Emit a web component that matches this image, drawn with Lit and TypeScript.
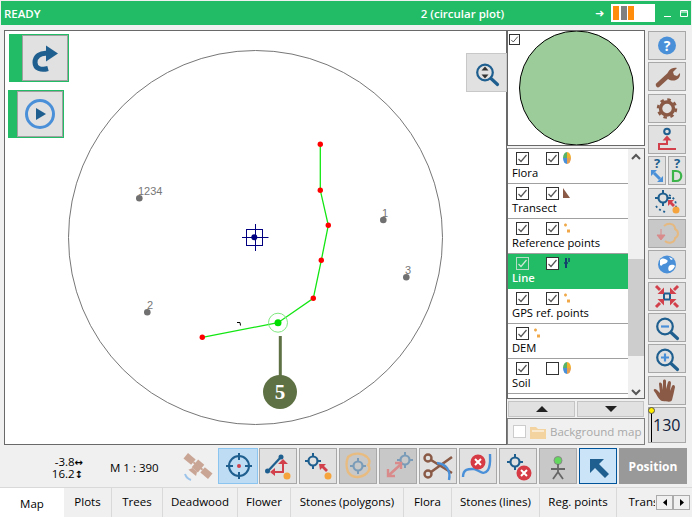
import { LitElement, html, svg, css } from 'lit';
import { customElement } from 'lit/decorators.js';

const DARK = '#1f5f8f';
const BLUE = '#4a90d9';
const BROWN = '#8a5a46';
const RED = '#d2404c';
const ORANGE = '#f5a33c';

const icon = (w: number, h: number, body: unknown) =>
  html`<svg width=${w} height=${h} viewBox="0 0 ${w} ${h}">${body}</svg>`;

const magnifier = (inner: unknown) => svg`
  <circle cx="16" cy="12.5" r="7.8" fill="none" stroke="${DARK}" stroke-width="2.2"/>
  <path d="M22 18.500l6.500 6" stroke="${DARK}" stroke-width="3.2" stroke-linecap="round"/>
  ${inner}`;

const target = (x: number, y: number, c = DARK) => svg`
  <circle cx=${x} cy=${y} r="4.5" fill="none" stroke=${c} stroke-width="2.2"/>
  <path d="M${x} ${y - 8}v3M${x} ${y + 5}v3M${x - 8} ${y}h3M${x + 5} ${y}h3" stroke=${c} stroke-width="2"/>`;

const del = (x: number, y: number, r: number) => svg`
  <circle cx=${x} cy=${y} r=${r} fill="#d63a44"/>
  <path d="M${x - 3} ${y - 3}l6 6M${x + 3} ${y - 3}l-6 6" stroke="#fff" stroke-width="2"/>`;

const inward = svg`<path d="M7 3l4 4" stroke="${RED}" stroke-width="3"/><path d="M15 11V4.500L8.500 11z" fill="${RED}"/>`;

const pie = html`<svg class="mini" width="8" height="12" viewBox="0 0 8 12">
  <path d="M4 0a4 6 0 0 0-4 6h4z" fill="#58b368"/><path d="M4 0a4 6 0 0 1 4 6H4z" fill="#f0b030"/>
  <path d="M0 6a4 6 0 0 0 4 6V6z" fill="#4a90d9"/><path d="M8 6a4 6 0 0 1-4 6V6z" fill="#e8a050"/></svg>`;
const tri = html`<svg class="mini" width="8" height="12" viewBox="0 0 8 12">
  <path d="M0 1l7 10H0z" fill="#8a5a46"/></svg>`;
const dots = html`<svg class="mini" width="8" height="12" viewBox="0 0 8 12">
  <path d="M1 3h3M2.500 1.500v3" stroke="#f0a848" stroke-width="1.500"/><path d="M4 7.500h3v3H4z" fill="#f0a848"/></svg>`;
const lineIcon = html`<svg class="mini" width="8" height="12" viewBox="0 0 8 12">
  <path d="M3 1v10" stroke="#16406c" stroke-width="2"/><path d="M1 6h4M5 2h2M5 4h2" stroke="#16406c" stroke-width="1.500"/></svg>`;

const check = html`<svg viewBox="0 0 11 11" width="100%" height="100%"><path d="M1.500 6l2.500 2.500 5.500-6.500" fill="none" stroke="currentColor" stroke-width="1.200"/></svg>`;

const LAYERS = [
  { name: 'Flora', a: true, b: true, mini: pie },
  { name: 'Transect', a: true, b: true, mini: tri },
  { name: 'Reference points', a: true, b: true, mini: dots },
  { name: 'Line', a: true, b: true, mini: lineIcon, active: true },
  { name: 'GPS ref. points', a: true, b: true, mini: dots },
  { name: 'DEM', a: true, b: null, mini: dots },
  { name: 'Soil', a: true, b: false, mini: pie },
];

const TABS: [string, number][] = [
  ['Plots', 48], ['Trees', 51], ['Deadwood', 75], ['Flower', 53],
  ['Stones (polygons)', 113], ['Flora', 48], ['Stones (lines)', 88], ['Reg. points', 77], ['Transect', 70],
];

const TOOLS = [
  { i: icon(36, 27, svg`<circle cx="18" cy="13.500" r="9" fill="${BLUE}"/><text x="18" y="18.500" text-anchor="middle" class="q w">?</text>`) },
  { i: icon(36, 27, svg`<path d="M9 22L21 11" stroke="${BROWN}" stroke-width="4.500" stroke-linecap="round"/><path d="M19 13c-1-5 3-9 9-8l-4 4 1 3 3 1 3-3c1 6-6 10-12 6z" fill="${BROWN}"/>`) },
  { i: icon(36, 27, svg`<circle cx="18" cy="13.500" r="6.500" fill="none" stroke="${BROWN}" stroke-width="3.500"/><circle cx="18" cy="13.500" r="9" fill="none" stroke="${BROWN}" stroke-width="2.500" stroke-dasharray="3.500 3.570"/>`) },
  { i: icon(36, 27, svg`<circle cx="18" cy="5.500" r="2.800" fill="none" stroke="${DARK}" stroke-width="2"/><path d="M18 9.500l-4.500 5h9z" fill="${RED}"/><path d="M18 13v5H10v5h17" fill="none" stroke="${RED}" stroke-width="2"/>`) },
  {
    pair: [
      icon(16, 27, svg`<text x="8" y="11" text-anchor="middle" class="q d">?</text><path d="M2 13h6l-6 6zM14 25H8l6-6z" fill="${BLUE}"/><path d="M5 16l6 6" stroke="${BLUE}" stroke-width="3"/>`),
      icon(16, 27, svg`<text x="8" y="11" text-anchor="middle" class="q d">?</text><path d="M4 14h3c7 0 7 10 0 10H4z" fill="none" stroke="#3cb44a" stroke-width="2.200"/>`),
    ],
  },
  { i: icon(36, 27, svg`${target(14, 9)}<path d="M20 6a12 12 0 0 1 7 12M7 17a14 14 0 0 0 11 6" fill="none" stroke="${DARK}" stroke-width="1.800" stroke-dasharray="2 2.500"/><path d="M19 11h6l-2 2 3 3-2 2-3-3-2 2z" fill="${RED}"/><circle cx="27" cy="21" r="3.500" fill="${ORANGE}"/>`) },
  { off: true, i: icon(36, 27, svg`<path d="M15 6c5-4 11-2 11 3 4 2 4 7 0 9 0 5-7 6-10 3" fill="none" stroke="#e5b980" stroke-width="2"/><path d="M12 9v7M8 15h8l-4 5z" fill="#d98a8a" stroke="#d98a8a"/>`) },
  { i: icon(36, 27, svg`<circle cx="18" cy="13.500" r="9" fill="${BLUE}"/><path d="M11 9c3-3 5-1 7 0s-1 4-3 4-2 3-4 1zM20 15c3-2 5-1 6 0-1 3-4 5-6 5-1-2-1-3 0-5zM20 6l4 2-2 1z" fill="#fff"/>`) },
  { i: icon(36, 27, svg`<rect x="15" y="10.500" width="6" height="6" fill="none" stroke="${DARK}" stroke-width="2"/>
      <g>${inward}</g>
      <g transform="translate(36 0) scale(-1 1)">${inward}</g>
      <g transform="translate(0 27) scale(1 -1)">${inward}</g>
      <g transform="translate(36 27) scale(-1 -1)">${inward}</g>`) },
  { i: icon(36, 27, magnifier(svg`<path d="M12 12.500h8" stroke="${BLUE}" stroke-width="2.200"/>`)) },
  { i: icon(36, 27, magnifier(svg`<path d="M12 12.500h8M16 8.500v8" stroke="${BLUE}" stroke-width="2.200"/>`)) },
  { i: icon(36, 27, svg`<path d="M13 24c-3-1-5-6-8-10-1-2 1-3 3-1l3 3-1-9c0-2 2-2 3 0l1 6V4c0-2 3-2 3 0v8l2-7c1-2 3-1 3 1l-1 8 2-5c1-2 3-1 3 1-1 5-2 9-3 13-1 2-2 2-10 1z" fill="${BROWN}"/>`) },
];

const BAR = [
  { active: true, i: icon(38, 34, svg`<circle cx="20" cy="17" r="10" fill="none" stroke="${DARK}" stroke-width="2"/><path d="M20 4v7M20 23v7M7 17h7M26 17h7" stroke="${DARK}" stroke-width="2"/><circle cx="20" cy="17" r="2" fill="${RED}"/>`) },
  { i: icon(36, 34, svg`<path d="M8 22L21 8" stroke="${DARK}" stroke-width="2.200"/><circle cx="7.500" cy="22" r="2.500" fill="${DARK}"/><circle cx="21" cy="8" r="2.500" fill="${DARK}"/><path d="M14 23h9v-8" fill="none" stroke="${RED}" stroke-width="2"/><path d="M18 15h10l-5-5zM15 19v8l-5-4z" fill="${RED}"/><circle cx="27" cy="27" r="3.500" fill="${ORANGE}"/>`) },
  { i: icon(36, 34, svg`${target(13, 12)}<path d="M19 15h7l-2 2 4 4-2 2-4-4-2 2z" fill="${RED}"/><circle cx="28" cy="27" r="3.500" fill="${ORANGE}"/>`) },
  { off: true, i: icon(36, 34, svg`<path d="M8 8c6-5 14-4 19 0 3 3 3 6 1 8 2 2 2 5-1 8-7 6-15 5-19-1-2-5-2-10 0-15z" fill="none" stroke="#e8bc80" stroke-width="2.400"/>${target(18, 17, '#7b9cb8')}`) },
  { off: true, i: icon(36, 34, svg`${target(25, 11, '#7b9cb8')}<path d="M8 27l12-11M8 20v7h7M15 14h6v6" fill="none" stroke="#d98a8a" stroke-width="2.400"/>`) },
  { i: icon(36, 34, svg`<circle cx="8" cy="9" r="3.500" fill="none" stroke="${BROWN}" stroke-width="2.400"/><circle cx="8" cy="25" r="3.500" fill="none" stroke="${BROWN}" stroke-width="2.400"/><path d="M11 11l21 13M11 23L32 8" stroke="${BROWN}" stroke-width="2.600"/><path d="M17 14c9 1 14 7 12 17" fill="none" stroke="${BLUE}" stroke-width="2.400"/>`) },
  { i: icon(36, 34, svg`<path d="M3 28c0-9 7-8 11-8s9 8 14 1c3-5 2-11 2-16" fill="none" stroke="${BLUE}" stroke-width="2.400"/>${del(18, 13, 7.5)}`) },
  { i: icon(36, 34, svg`${target(15, 13)}${del(24, 24, 7.5)}`) },
  { off: true, i: icon(36, 34, svg`<circle cx="18" cy="11.500" r="4" fill="#62d85c" stroke="#888"/><path d="M18 15v9M11 20h14M18 23l-5 7M18 23l5 7" stroke="#666" stroke-width="1.800"/>`) },
  { selected: true, i: icon(36, 34, svg`<path d="M10 10h14l-5 5 10 10-4 4-10-10-5 5z" fill="${DARK}"/>`) },
];

@customElement('app-root')
export class AppRoot extends LitElement {
  static styles = css`
    :host {
      display: block;
      width: 692px;
      height: 517px;
      background: #f0f0f0;
      overflow: hidden;
      font-family: 'Open Sans', 'Liberation Sans', sans-serif;
      font-size: 11.5px;
      color: #000;
    }
    svg {
      display: block;
      overflow: visible;
    }
    .title {
      display: flex;
      align-items: center;
      height: 24px;
      margin: 1px 1px 0;
      background: #22bb66;
      color: #fff;
      font-weight: 600;
      font-size: 11.5px;
    }
    .ready {
      width: 330px;
      padding-left: 3px;
    }
    .plot {
      width: 261px;
      padding-right: 4px;
      box-sizing: border-box;
      text-align: center;
    }
    .arrow {
      font: bold 11px 'DejaVu Sans', sans-serif;
      width: 16px;
    }
    .meter {
      display: flex;
      gap: 1.5px;
      width: 40px;
      height: 14px;
      padding: 2px;
      background: #fff;
    }
    .meter i {
      width: 6px;
      background: #ff8c0a;
    }
    .meter i.g {
      background: #808080;
    }
    .win {
      display: flex;
      margin-left: 9px;
      gap: 9px;
      align-items: center;
    }
    .main {
      display: flex;
      height: 415px;
      margin: 5px 0 0 4px;
    }
    .map {
      position: relative;
      width: 501px;
      height: 413px;
      background: #fff;
      border: 1px solid #696969;
      flex: none;
    }
    .map svg.plan {
      position: absolute;
      left: -5px;
      top: -31px;
    }
    .plan text {
      font: 11px 'Liberation Sans', sans-serif;
      fill: #777;
    }
    .plan text.five {
      font: bold 21px 'Liberation Serif', serif;
      fill: #fff;
    }
    .over {
      position: absolute;
      display: flex;
      background: #22bb66;
      padding: 1px;
    }
    .over .face {
      background: #e1e1e1;
      border: 1px solid #a0a0a0;
      box-sizing: border-box;
    }
    .redo {
      left: 4px;
      top: 3px;
      padding-left: 13px;
    }
    .play {
      left: 3px;
      top: 59px;
      padding-left: 9px;
    }
    .seek {
      position: absolute;
      right: -1px;
      top: 22px;
      width: 41px;
      height: 39px;
      box-sizing: border-box;
      background: #e1e1e1;
      border: 1px solid #c8c8c8;
      display: flex;
      align-items: center;
      justify-content: center;
    }
    .side {
      width: 138px;
      flex: none;
      display: flex;
      flex-direction: column;
    }
    .preview {
      position: relative;
      height: 116px;
      box-sizing: border-box;
      background: #fff;
      border: 1px solid #696969;
      display: flex;
      justify-content: center;
      overflow: hidden;
    }
    .preview .box {
      position: absolute;
      left: 1px;
      top: 3px;
      width: 9px;
      height: 9px;
    }
    .cb {
      width: 11px;
      height: 11px;
      border: 1px solid #333;
      background: #fff;
      color: #555;
      flex: none;
    }
    .layers {
      display: flex;
      height: 251px;
      margin-top: 2px;
      box-sizing: border-box;
      border: 1px solid #696969;
      border-top-color: #999;
      background: #fff;
      overflow: hidden;
    }
    .rows {
      width: 120px;
      flex: none;
    }
    .row {
      height: 35px;
      box-sizing: border-box;
      padding: 2px 0 0 4px;
      border-bottom: 1px solid #a0a0a0;
    }
    .row.on {
      background: #22bb66;
      color: #fff;
      font-weight: 600;
      border-bottom-color: #22bb66;
    }
    .row.on .cb.first {
      background: transparent;
      border-color: #b9dcc6;
      color: #cfe8d8;
    }
    .checks {
      display: flex;
      align-items: center;
      height: 14px;
      padding-left: 4px;
    }
    .checks .cb + .cb {
      margin-left: 17px;
    }
    .mini {
      margin-left: 4px;
    }
    .name {
      display: block;
      font-size: 11.2px;
      line-height: 15px;
      white-space: nowrap;
    }
    .scroll {
      position: relative;
      width: 16px;
      background: #f0f0f0;
      flex: none;
    }
    .scroll .thumb {
      position: absolute;
      top: 110px;
      left: 0;
      right: 0;
      height: 97px;
      background: #cdcdcd;
    }
    .scroll .up,
    .scroll .dn {
      position: absolute;
      left: 3px;
    }
    .scroll .up {
      top: 4px;
    }
    .scroll .dn {
      bottom: 2px;
    }
    .steps {
      display: flex;
      gap: 2px;
      margin: 2px 0 1px 1px;
    }
    .steps div {
      width: 67px;
      height: 16px;
      background: #e1e1e1;
      border: 1px solid #c4c4c4;
      box-sizing: border-box;
      display: flex;
      align-items: center;
      justify-content: center;
    }
    .bg {
      display: flex;
      align-items: center;
      height: 27px;
      box-sizing: border-box;
      border: 1px solid #808080;
      padding-left: 5px;
      color: #a8a8a8;
      font-size: 11.5px;
      white-space: nowrap;
      overflow: hidden;
    }
    .bg .cb {
      background: #fff;
      border-color: #ccc;
      margin-right: 4px;
    }
    .bg svg {
      margin-right: 4px;
    }
    .tools {
      display: flex;
      flex-direction: column;
      gap: 2.33px;
      margin-left: 3px;
      width: 38px;
      flex: none;
      padding-top: 1px;
    }
    .btn {
      height: 29px;
      box-sizing: border-box;
      background: #e1e1e1;
      border: 1px solid #a8a8a8;
      display: flex;
      align-items: center;
      justify-content: center;
      flex: none;
    }
    .btn.off {
      background: #c8c8c8;
    }
    .pair {
      display: flex;
      gap: 2px;
    }
    .pair .btn {
      width: 18px;
    }
    .q {
      font: bold 13px 'Open Sans', sans-serif;
    }
    .q.w {
      font-size: 14px;
      fill: #fff;
    }
    .q.d {
      fill: #1f5f8f;
    }
    .level {
      position: relative;
      height: 36px;
      font-size: 16px;
      color: #10203a;
      justify-content: flex-start;
      padding-left: 4px;
    }
    .level::before {
      content: '';
      position: absolute;
      left: 2px;
      top: 3px;
      bottom: 0;
      width: 1px;
      background: #000;
    }
    .level::after {
      content: '';
      position: absolute;
      left: -1px;
      top: -1px;
      width: 5px;
      height: 5px;
      border: 1px solid #555;
      border-radius: 50%;
      background: #ffee00;
    }
    .bar {
      display: flex;
      align-items: center;
      height: 36px;
      margin-top: 3px;
    }
    .coords {
      width: 83px;
      flex: none;
      text-align: right;
      line-height: 12px;
      font-size: 11.5px;
      padding-top: 3px;
    }
    .coords b {
      font: bold 10px 'DejaVu Sans', sans-serif;
    }
    .scale {
      margin-left: 27px;
      padding-top: 2px;
      width: 70px;
      flex: none;
    }
    .sat {
      width: 38px;
      flex: none;
    }
    .bar .btn {
      width: 38px;
      height: 36px;
      margin-right: 2px;
    }
    .bar .btn.active {
      width: 40px;
      margin-right: 1px;
      background: #bfdcf5;
      border-color: #8cc4f0;
    }
    .bar .btn.selected {
      background: #cce4f7;
      border: 1px solid #005499;
    }
    .pos {
      width: 68px;
      height: 36px;
      background: #999;
      color: #fff;
      font-weight: 700;
      font-size: 12px;
      display: flex;
      align-items: center;
      justify-content: center;
    }
    .tabs {
      display: flex;
      height: 31px;
      margin-top: 3px;
      border-top: 1px solid #d9d9d9;
    }
    .strip {
      display: flex;
      width: 655px;
      flex: none;
      overflow: hidden;
    }
    .tab {
      flex: none;
      box-sizing: border-box;
      height: 31px;
      line-height: 27px;
      text-align: center;
      border-right: 1px solid #d9d9d9;
      white-space: nowrap;
    }
    .tab.first {
      width: 64px;
      background: #fff;
      line-height: 33px;
      margin-top: -1px;
      height: 32px;
      border-right: 0;
    }
    .spin {
      display: flex;
      margin: 7px 0 0 1px;
    }
    .spin div {
      width: 17px;
      height: 15px;
      box-sizing: border-box;
      background: #f0f0f0;
      border: 1px solid #aaa;
      display: flex;
      align-items: center;
      justify-content: center;
    }
  `;

  plan() {
    const reds = [[320.3, 144.3], [320.3, 190.3], [328.3, 225.3], [321.3, 260.3], [313.3, 298.3], [202.3, 337.3]];
    const grey: [number, number, string, number, number][] = [
      [139.3, 198.3, '1234', 138, 195],
      [383.3, 220, '1', 382, 217],
      [406.3, 277.3, '3', 405, 274],
      [147.3, 312.3, '2', 147, 309],
    ];
    return html`<svg class="plan" width="506" height="444" viewBox="0 0 506 444">
      <circle cx="255.5" cy="237.5" r="187" fill="none" stroke="#777" stroke-width="1"/>
      <path d="M320.300 144.300V190.300L328.300 225.300 321.300 260.300 313.300 298.300 278 322.700 202.300 337.300" fill="none" stroke="#12e612" stroke-width="1.300"/>
      ${reds.map(([x, y]) => svg`<circle cx=${x} cy=${y} r="2.700" fill="#f00"/>`)}
      <circle cx="278" cy="322.7" r="3.5" fill="#0d0"/>
      <circle cx="278" cy="322.7" r="9.5" fill="none" stroke="#7fe87f" stroke-width="1"/>
      <path d="M237 322.500h3l.5 3" fill="none" stroke="#000" stroke-width="1"/>
      ${grey.map(([x, y, t, tx, ty]) => svg`<circle cx=${x} cy=${y} r="3.300" fill="#707070"/><text x=${tx} y=${ty}>${t}</text>`)}
      <rect x="246.5" y="229.5" width="16" height="16" fill="none" stroke="#000080" stroke-width="1"/>
      <path d="M242 237.500h26.500M255.500 224v27" stroke="#000080" stroke-width="1"/>
      <circle cx="254.3" cy="237.3" r="3" fill="#000080"/>
      <path d="M280.300 336v40" stroke="#5e7144" stroke-width="3"/>
      <circle cx="280" cy="392" r="17" fill="#5e7144"/>
      <text class="five" x="280" y="399" text-anchor="middle">5</text>
    </svg>`;
  }

  render() {
    return html`
      <div class="title">
        <span class="ready">READY</span>
        <span class="plot">2 (circular plot)</span>
        <span class="arrow">➜</span>
        <div class="meter"><i></i><i class="g"></i><i></i></div>
        <div class="win">
          <svg width="7" height="7" viewBox="0 0 7 7"><path d="M0 6.500h7" stroke="#fff"/></svg>
          <svg width="8" height="7" viewBox="0 0 8 7"><path d="M.5.500h7v6h-7zM.5 2h7" fill="none" stroke="#fff"/></svg>
        </div>
      </div>
      <div class="main">
        <div class="map">
          ${this.plan()}
          <div class="over redo">
            <div class="face">
              ${icon(44, 44, svg`<path d="M23 9.500l12 8-12 8z" fill="${DARK}"/><path d="M25 17.500c-8-1-13 3-13 9 0 6 6 8 13 6" fill="none" stroke="${DARK}" stroke-width="5"/>`)}
            </div>
          </div>
          <div class="over play">
            <div class="face">
              ${icon(44, 44, svg`<circle cx="22" cy="22" r="13.500" fill="none" stroke="${BLUE}" stroke-width="3"/><path d="M18 16l10 6-10 6z" fill="${DARK}"/>`)}
            </div>
          </div>
          <div class="seek">
            ${icon(36, 32, svg`<g transform="translate(0 3)">${magnifier(svg`<path d="M16 6.500l3.500 4h-7zM16 18.500l3.500-4h-7z" fill="#333"/>`)}</g>`)}
          </div>
        </div>
        <div class="side">
          <div class="preview">
            <svg width="136" height="114" viewBox="0 0 136 114"><ellipse cx="68.5" cy="57" rx="57" ry="57" fill="#9ccc9a" stroke="#000" stroke-width="1"/></svg>
            <div class="cb box">${check}</div>
          </div>
          <div class="layers">
            <div class="rows">
              ${LAYERS.map(l => html`
                <div class="row ${l.active ? 'on' : ''}">
                  <div class="checks">
                    <div class="cb first">${l.a ? check : ''}</div>
                    ${l.b === null ? '' : html`<div class="cb">${l.b ? check : ''}</div>`}
                    ${l.mini}
                  </div>
                  <span class="name">${l.name}</span>
                </div>`)}
            </div>
            <div class="scroll">
              <div class="thumb"></div>
              <svg class="up" width="10" height="7" viewBox="0 0 10 7"><path d="M1 6l4-4 4 4" fill="none" stroke="#555" stroke-width="2"/></svg>
              <svg class="dn" width="10" height="7" viewBox="0 0 10 7"><path d="M1 1l4 4 4-4" fill="none" stroke="#555" stroke-width="2"/></svg>
            </div>
          </div>
          <div class="steps">
            <div><svg width="12" height="6" viewBox="0 0 12 6"><path d="M0 6l6-6 6 6z" fill="#222"/></svg></div>
            <div><svg width="12" height="6" viewBox="0 0 12 6"><path d="M0 0l6 6 6-6z" fill="#222"/></svg></div>
          </div>
          <div class="bg">
            <div class="cb"></div>
            <svg width="16" height="14" viewBox="0 0 16 14"><path d="M0 2h6l2 2h8v10H0z" fill="#f3d3a0"/><path d="M2 6h12" stroke="#fff"/></svg>
            Background map
          </div>
        </div>
        <div class="tools">
          ${TOOLS.map(t => t.pair
            ? html`<div class="pair">${t.pair.map(p => html`<div class="btn">${p}</div>`)}</div>`
            : html`<div class="btn ${t.off ? 'off' : ''}">${t.i}</div>`)}
          <div class="btn level">130</div>
        </div>
      </div>
      <div class="bar">
        <div class="coords">-3.8<b>↔</b><br />16.2<b>↕</b></div>
        <div class="scale">M 1 : 390</div>
        <div class="sat">
          ${icon(36, 34, svg`<g fill="#c9a595" transform="rotate(40 18 17)"><rect x="14" y="12" width="8" height="10"/><rect x="2" y="13.500" width="10" height="7"/><rect x="24" y="13.500" width="10" height="7"/><path d="M12 16h12v2H12z"/><path d="M15 22h6l2 4H13z"/></g><path d="M5 25c1 3 3 5 6 6" fill="none" stroke="#9cc4ea" stroke-width="2"/>`)}
        </div>
        ${BAR.map(b => html`<div class="btn ${b.off ? 'off' : ''} ${b.active ? 'active' : ''} ${b.selected ? 'selected' : ''}">${b.i}</div>`)}
        <div class="pos">Position</div>
      </div>
      <div class="tabs">
        <div class="strip">
          <div class="tab first">Map</div>
          ${TABS.map(([t, w]) => html`<div class="tab" style="width:${w}px">${t}</div>`)}
        </div>
        <div class="spin">
          <div><svg width="4" height="7" viewBox="0 0 4 7"><path d="M4 0v7L0 3.500z" fill="#000"/></svg></div>
          <div><svg width="4" height="7" viewBox="0 0 4 7"><path d="M0 0v7l4-3.500z" fill="#000"/></svg></div>
        </div>
      </div>
    `;
  }
}
